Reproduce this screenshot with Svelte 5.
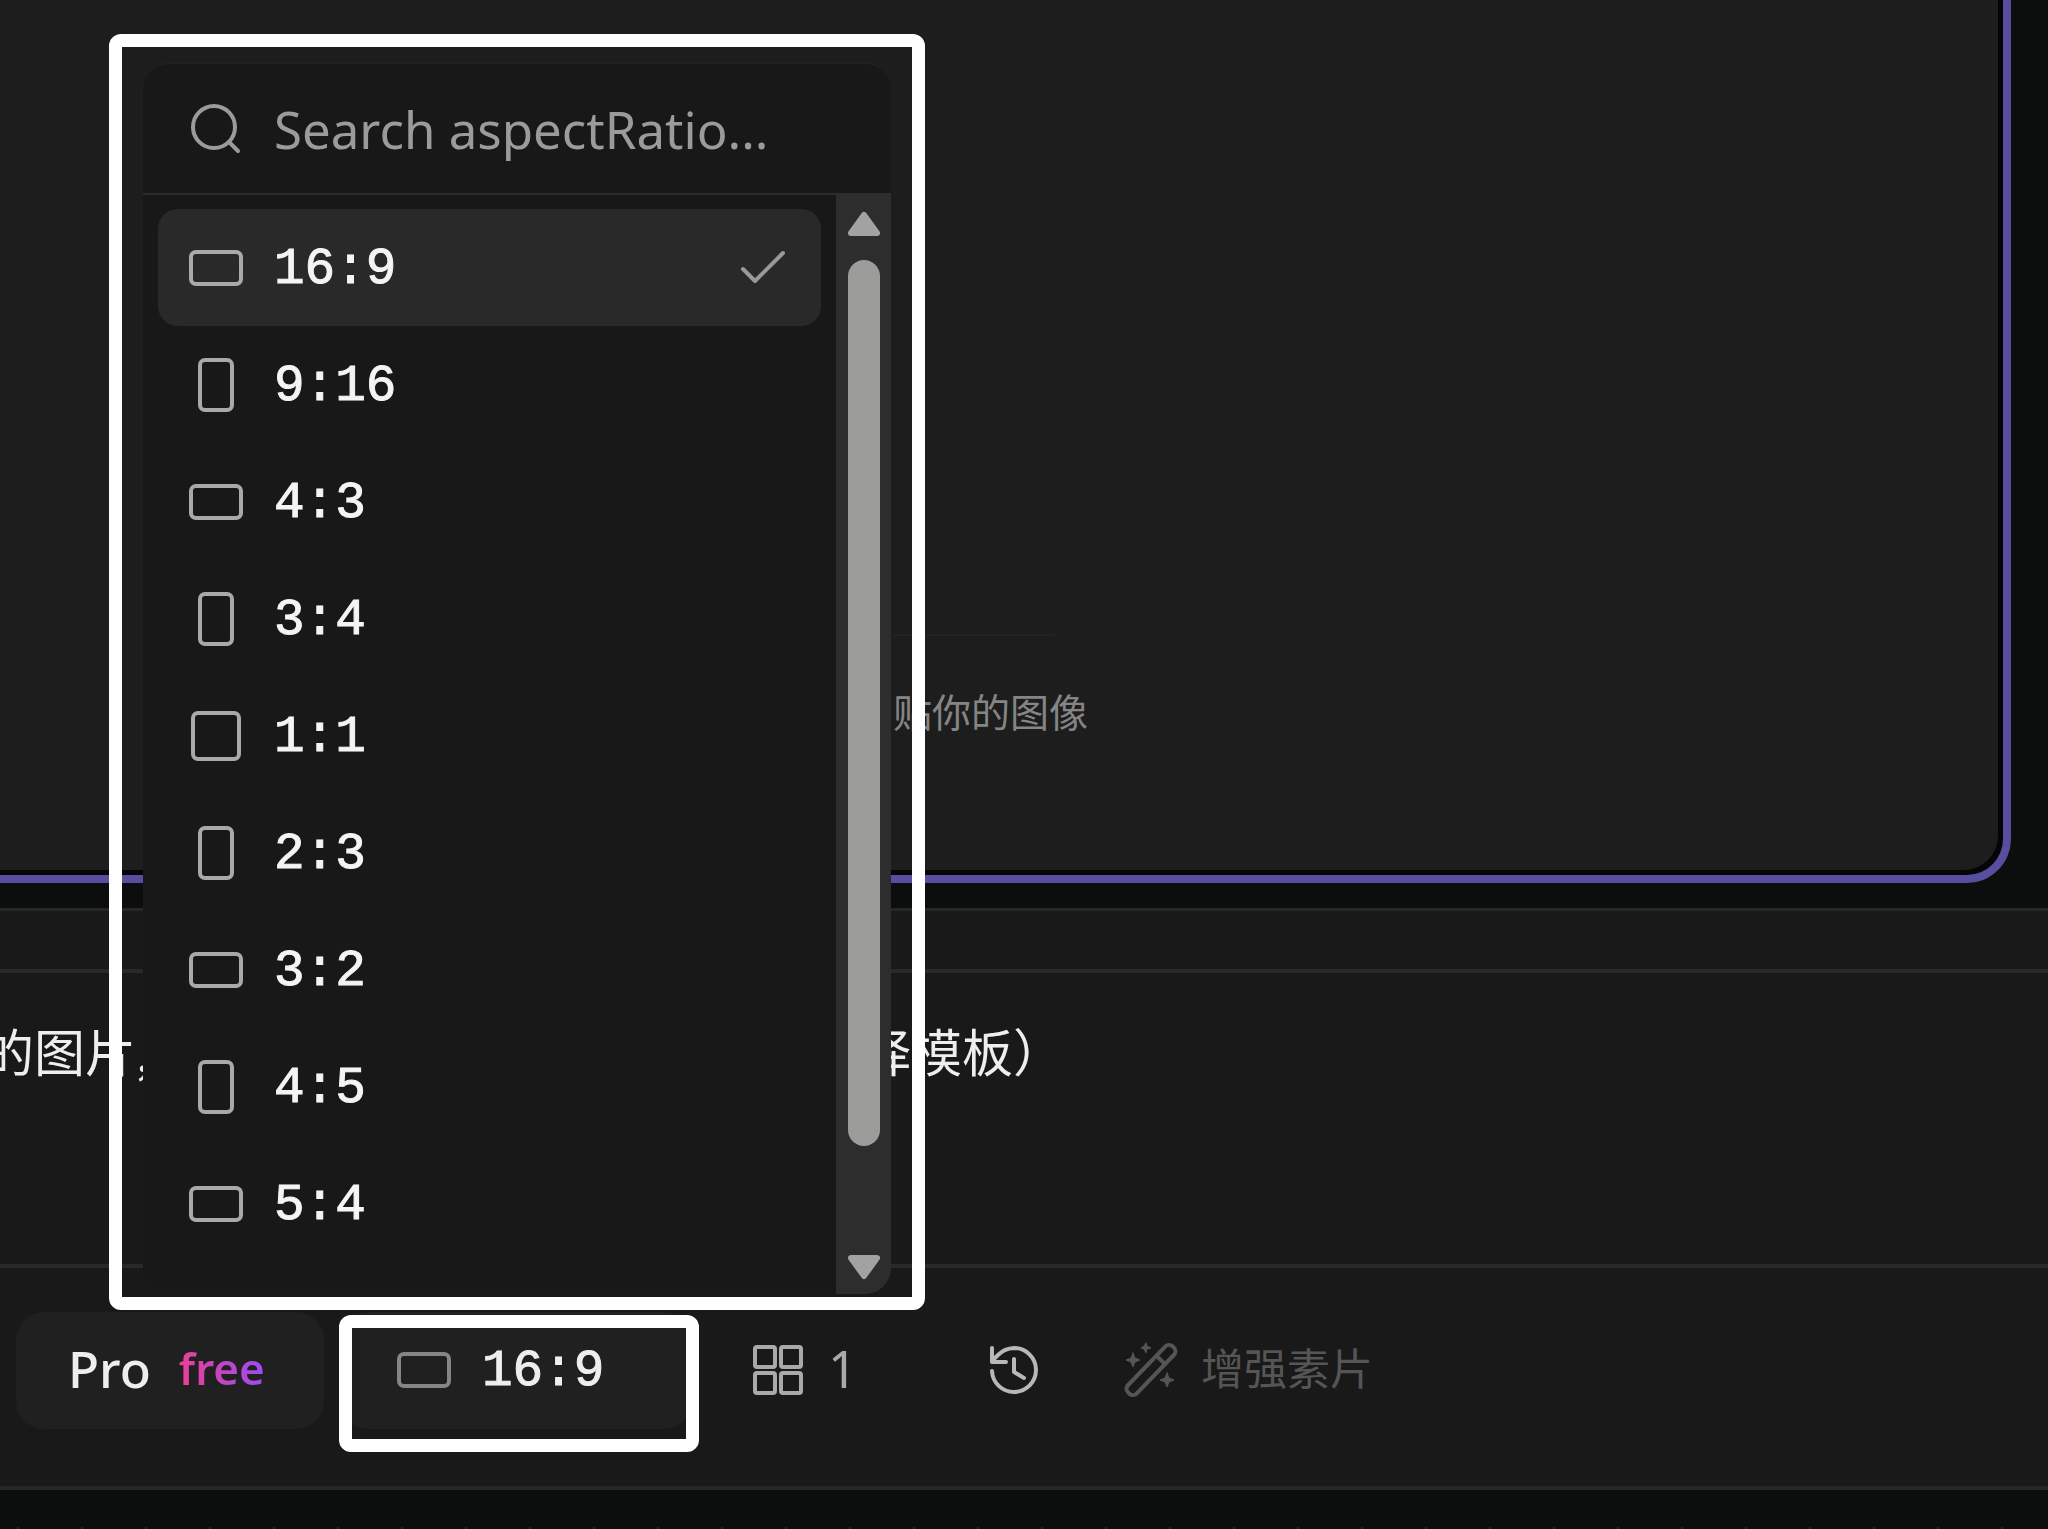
<script>
const ratios = [ "16:9", "9:16", "4:3", "3:4", "1:1", "2:3", "3:2", "4:5", "5:4" ];

let selected = $state("16:9");
let query = $state("");

const shown = $derived(ratios.filter((ratio) => ratio.includes(query)));

const shape = (ratio) => {
    const [ w, h ] = ratio.split(":").map(Number);

    if(w === h) {
        return "square";
    }

    return w > h ? "landscape" : "portrait";
};
</script>

<div class="page">
    <main class="canvas">
        <div class="drop">
            <div class="drop-line"></div>
            <p class="hint">贴你的图像</p>
        </div>
    </main>

    <section class="composer">
        <div class="strip"></div>

        <div class="prompt">
            <span class="lead">的图片,</span>
            <span>择模板）</span>
        </div>

        <div class="toolbar">
            <button class="tool filled plan">
                <span>Pro</span>
                <span class="free">free</span>
            </button>

            <div class="picker">
                <button class="tool filled ratio" aria-haspopup="listbox" aria-expanded="true">
                    <span class="slot"><i class={shape(selected)}></i></span>
                    <span class="mono">{selected}</span>
                </button>
                <div class="ring"></div>

                <div class="frame">
                    <div class="menu">
                        <label class="search">
                            <svg viewBox="0 0 60 60" aria-hidden="true">
                                <circle cx="28" cy="28" r="21" />
                                <path d="M43 43 52 52" />
                            </svg>
                            <input type="text" placeholder="Search aspectRatio..." aria-label="Search aspectRatio" bind:value={query} />
                        </label>

                        <div class="body">
                            <div class="list" role="listbox" aria-label="aspectRatio">
                                {#each shown as ratio}
                                <button
                                    class="option"
                                    class:active={ratio === selected}
                                    role="option"
                                    aria-selected={ratio === selected}
                                    onclick={() => (selected = ratio)}
                                >
                                    <span class="slot"><i class={shape(ratio)}></i></span>
                                    <span class="mono">{ratio}</span>
                                    {#if ratio === selected}
                                    <svg class="check" viewBox="0 0 60 60" aria-hidden="true">
                                        <path d="M10 31 22 43 50 15" />
                                    </svg>
                                    {/if}
                                </button>
                                {/each}
                            </div>

                            <div class="scrollbar">
                                <svg viewBox="0 0 34 26" aria-hidden="true">
                                    <path d="M17 4 30 22H4Z" />
                                </svg>
                                <div class="thumb"></div>
                                <svg viewBox="0 0 34 26" aria-hidden="true">
                                    <path d="M17 22 30 4H4Z" />
                                </svg>
                            </div>
                        </div>
                    </div>
                </div>
            </div>

            <button class="tool count">
                <svg viewBox="0 0 60 60" aria-hidden="true">
                    <rect x="7" y="7" width="20" height="20" rx="2" />
                    <rect x="33" y="7" width="20" height="20" rx="2" />
                    <rect x="7" y="33" width="20" height="20" rx="2" />
                    <rect x="33" y="33" width="20" height="20" rx="2" />
                </svg>
                <span>1</span>
            </button>

            <button class="tool history" aria-label="History">
                <svg viewBox="0 0 60 60" aria-hidden="true">
                    <path d="M8 31a22 22 0 1 0 22-23a24 24 0 0 0-16 7L8 21" />
                    <path d="M8 8v14h14" />
                    <path d="M30 19v13l10 6" />
                </svg>
            </button>

            <button class="tool enhance" disabled>
                <svg viewBox="0 0 60 60" aria-hidden="true">
                    <g transform="rotate(-46 30 30)">
                        <rect x="-2" y="24" width="64" height="12" rx="5" />
                        <path d="M44 24v12" />
                    </g>
                    <path class="star" d="M12 13l2 5 5 2-5 2-2 5-2-5-5-2 5-2Z" />
                    <path class="star" d="M25 3l1 3 4 2-4 1-1 4-2-4-3-1 3-2Z" />
                    <path class="star" d="M46 33l2 5 5 2-5 2-2 5-2-5-5-2 5-2Z" />
                </svg>
                <span>增强素片</span>
            </button>
        </div>
    </section>

    <footer></footer>
</div>

<style>
    :global(body) {
        margin: 0;
        background: #0C0E0D;
    }

    .page {
        display: flex;
        flex-flow: column nowrap;

        min-height: 100vh;
        overflow: hidden;

        font-family: "Noto Sans", "Noto Sans CJK SC", sans-serif;
        font-size: 51px;
        line-height: 60px;
        color: #EEE;
    }

    .page * {
        box-sizing: border-box;
    }

    button,
    input {
        margin: 0;
        padding: 0;
        border: 0;
        background: none;

        color: inherit;
        font: inherit;
    }

    svg {
        flex: none;
        width: 60px;
        height: 60px;

        fill: none;
        stroke: currentColor;
        stroke-width: 4;
        stroke-linecap: round;
        stroke-linejoin: round;
    }

    .canvas {
        display: flex;
        flex: 1;

        margin: 0 37px 25px 0;
        padding: 0 5px 5px 0;

        border: solid #574EA0;
        border-width: 0 8px 8px 0;
        border-radius: 0 0 44px 0;
        background: #050505;
    }

    .drop {
        display: flex;
        flex: 1;
        flex-flow: column nowrap;
        justify-content: flex-end;

        padding: 0 0 130px 893px;
        border-radius: 0 0 34px 0;
        background: #1D1D1D;
    }

    .drop-line {
        width: 162px;
        height: 2px;
        background: #232323;
    }

    .hint {
        margin: 44px 0 0;

        color: #858585;
        font-family: "Noto Sans CJK SC", sans-serif;
        font-size: 39px;
        font-weight: 400;
    }

    .composer {
        border: solid #272727;
        border-width: 3px 0 4px;
        background: #191919;
    }

    .strip {
        height: 62px;
        border-bottom: 4px solid #292929;
    }

    .prompt {
        display: flex;

        height: 295px;
        padding-top: 47px;
        border-bottom: 4px solid #292929;

        font-family: "Noto Sans CJK SC", sans-serif;
        font-weight: 400;
        white-space: nowrap;
    }

    .lead {
        width: 877px;
        margin-left: -17px;
    }

    .toolbar {
        display: flex;
        gap: 16px;

        padding: 44px 16px 57px;
    }

    .tool {
        display: flex;
        align-items: center;
        gap: 28px;

        height: 117px;
        padding: 0 52px 2px;
        border-radius: 28px;

        color: #A9A9A9;
        white-space: nowrap;
    }

    .filled {
        background: #202020;
        color: #EEE;
    }

    .plan {
        width: 308px;
        padding-bottom: 6px;
        font-weight: 500;
    }

    .free {
        background: linear-gradient(90deg, #EC3F96, #9A4DF0);
        background-clip: text;
        color: transparent;

        font-size: 44px;
        font-weight: 600;
    }

    .mono {
        padding-top: 4px;

        font-family: "Liberation Mono", monospace;
        -webkit-text-stroke: 1px currentColor;
    }

    .slot {
        display: flex;
        justify-content: center;
        align-items: center;

        width: 60px;
        height: 60px;
    }

    .slot i {
        border: 4px solid #A9A9A9;
        border-radius: 7px;
    }

    .landscape {
        width: 54px;
        height: 36px;
    }

    .portrait {
        width: 36px;
        height: 54px;
    }

    .square {
        width: 50px;
        height: 50px;
    }

    .ratio {
        width: 352px;
        padding-left: 54px;
    }

    .ratio .slot i {
        border-color: #858585;
    }

    .picker {
        position: relative;
    }

    .ring {
        position: absolute;
        inset: 3px -7px -23px -1px;

        border: 13px solid #FFF;
        border-radius: 12px;
        pointer-events: none;
    }

    .frame {
        position: absolute;
        bottom: 119px;
        left: -231px;

        padding: 15px 21px 3px;
        border: 13px solid #FFF;
        border-radius: 12px;
    }

    .menu {
        width: 748px;
        border-top: 2px solid #212121;
        border-radius: 26px;
        background: #181818;
        overflow: hidden;
    }

    .search {
        display: flex;
        align-items: center;
        gap: 28px;

        height: 131px;
        padding: 0 43px;
        border-bottom: 2px solid #2D2D2D;

        color: #9B9B9B;
    }

    .search input {
        flex: 1;
        min-width: 0;
        height: 72px;
        outline: 0;
    }

    .search input::placeholder {
        color: #9B9B9B;
        opacity: 1;
    }

    .body {
        display: flex;
    }

    .list {
        flex: 1;
        padding: 14px 15px 32px;
    }

    .option {
        display: flex;
        align-items: center;
        gap: 28px;

        width: 100%;
        height: 117px;
        padding: 0 28px;
        border-radius: 20px;

        color: #F4F4F2;
    }

    .active {
        background: #292929;
    }

    .check {
        margin-left: auto;
        color: #999;
    }

    .scrollbar {
        display: flex;
        flex-flow: column nowrap;
        align-items: center;

        width: 55px;
        padding: 16px 0 14px;
        background: #2D2D2D;
    }

    .scrollbar svg {
        width: 34px;
        height: 26px;
        color: #A2A2A2;
        fill: currentColor;
        stroke-width: 6;
    }

    .thumb {
        flex: 1;

        width: 32px;
        margin: 23px 0 108px;
        border-radius: 16px;
        background: #9C9C9A;
    }

    .count {
        width: 220px;
        padding: 0 0 2px 40px;
        gap: 20px;
    }

    .count span {
        padding-bottom: 4px;
    }

    .history {
        width: 161px;
        padding: 0 0 2px 40px;
    }

    .history svg {
        color: #B8B8B8;
    }

    .enhance {
        padding: 0 0 2px;
        gap: 20px;

        color: #555;
        font-family: "Noto Sans CJK SC", sans-serif;
        font-size: 43px;
        font-weight: 400;
    }

    .enhance span {
        padding-bottom: 8px;
    }

    .star {
        fill: currentColor;
        stroke-width: 1;
    }

    footer {
        height: 39px;
        background: #0C0E0D radial-gradient(circle, #262626 1px, transparent 1px) -14px 6px / 64px 64px;
    }
</style>
